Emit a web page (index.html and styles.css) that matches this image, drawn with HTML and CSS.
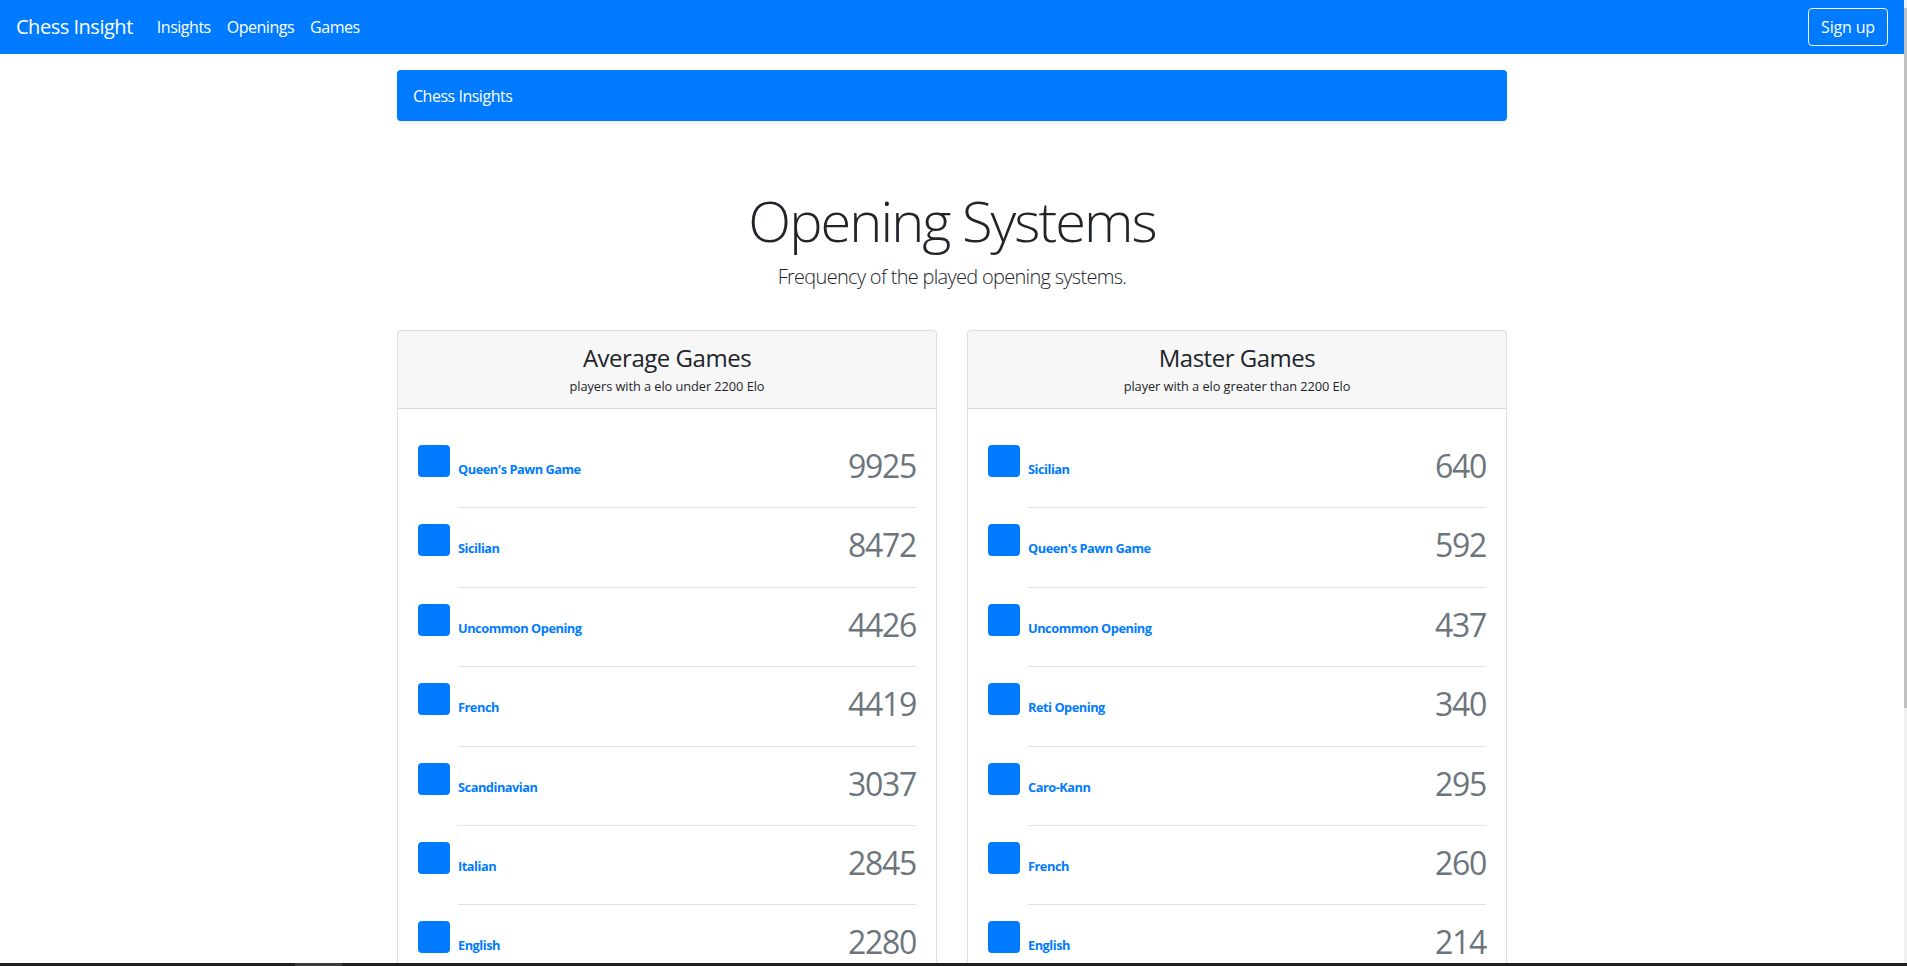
FILE: index.html
```html
<!DOCTYPE html>
<html lang="en">
<head>
<meta charset="utf-8">
<title>Chess Insight</title>
<link rel="stylesheet" href="styles.css">
</head>
<body>
<nav class="navbar">
  <a class="brand" href="#">Chess Insight</a>
  <ul class="nav-links">
    <li><a href="#">Insights</a></li>
    <li><a href="#">Openings</a></li>
    <li><a href="#">Games</a></li>
  </ul>
  <a class="btn-outline" href="#">Sign up</a>
</nav>
<main class="container">
  <div class="banner">Chess Insights</div>
  <header class="page-header">
    <h1 class="display">Opening Systems</h1>
    <p class="lead">Frequency of the played opening systems.</p>
  </header>
  <div class="card-row">
    <section class="card">
      <div class="card-header">
        <h4 class="card-title">Average Games</h4>
        <div><small>players with a elo under 2200 Elo</small></div>
      </div>
      <div class="card-body">
        <div class="media"><span class="thumb"></span><div class="media-body"><a class="name" href="#">Queen's Pawn Game</a><span class="count">9925</span></div></div>
        <div class="media"><span class="thumb"></span><div class="media-body"><a class="name" href="#">Sicilian</a><span class="count">8472</span></div></div>
        <div class="media"><span class="thumb"></span><div class="media-body"><a class="name" href="#">Uncommon Opening</a><span class="count">4426</span></div></div>
        <div class="media"><span class="thumb"></span><div class="media-body"><a class="name" href="#">French</a><span class="count">4419</span></div></div>
        <div class="media"><span class="thumb"></span><div class="media-body"><a class="name" href="#">Scandinavian</a><span class="count">3037</span></div></div>
        <div class="media"><span class="thumb"></span><div class="media-body"><a class="name" href="#">Italian</a><span class="count">2845</span></div></div>
        <div class="media"><span class="thumb"></span><div class="media-body"><a class="name" href="#">English</a><span class="count">2280</span></div></div>
      </div>
    </section>
    <section class="card">
      <div class="card-header">
        <h4 class="card-title">Master Games</h4>
        <div><small>player with a elo greater than 2200 Elo</small></div>
      </div>
      <div class="card-body">
        <div class="media"><span class="thumb"></span><div class="media-body"><a class="name" href="#">Sicilian</a><span class="count">640</span></div></div>
        <div class="media"><span class="thumb"></span><div class="media-body"><a class="name" href="#">Queen's Pawn Game</a><span class="count">592</span></div></div>
        <div class="media"><span class="thumb"></span><div class="media-body"><a class="name" href="#">Uncommon Opening</a><span class="count">437</span></div></div>
        <div class="media"><span class="thumb"></span><div class="media-body"><a class="name" href="#">Reti Opening</a><span class="count">340</span></div></div>
        <div class="media"><span class="thumb"></span><div class="media-body"><a class="name" href="#">Caro-Kann</a><span class="count">295</span></div></div>
        <div class="media"><span class="thumb"></span><div class="media-body"><a class="name" href="#">French</a><span class="count">260</span></div></div>
        <div class="media"><span class="thumb"></span><div class="media-body"><a class="name" href="#">English</a><span class="count">214</span></div></div>
      </div>
    </section>
  </div>
</main>
<div class="scrollbar"><div class="scroll-thumb"></div></div>
<div class="taskbar"><span class="task-item"></span></div>
</body>
</html>
```
FILE: styles.css
```css
html {
  -webkit-font-smoothing: antialiased;
}
body {
  margin: 0 3px 0 0;
  font-family: "Open Sans", "Noto Sans", "Liberation Sans", sans-serif;
  font-size: 16px;
  line-height: 1.5;
  letter-spacing: -0.03em;
  color: #212529;
  background: #fff;
}
a {
  text-decoration: none;
}
.navbar {
  display: flex;
  align-items: center;
  padding: 8px 16px;
  background: #007bff;
}
.brand {
  font-size: 20px;
  line-height: 30px;
  padding: 4px 0;
  margin-right: 16px;
  color: #fff;
}
.nav-links {
  display: flex;
  flex: 1;
  list-style: none;
  margin: 0;
  padding: 0;
}
.nav-links a {
  display: block;
  padding: 7px 8px;
  color: #fff;
}
.btn-outline {
  display: inline-block;
  padding: 6px 12px;
  line-height: 24px;
  letter-spacing: -0.01em;
  color: #fff;
  border: 1px solid #f8f9fa;
  border-radius: 4px;
}
.container {
  width: 1110px;
  margin: 0 auto;
}
.banner {
  margin: 16px 0;
  padding: 13px 16px 11px;
  line-height: 27px;
  color: #fff;
  background: #007bff;
  border-radius: 4px;
  box-shadow: 0 2px 4px rgba(0, 0, 0, 0.075);
}
.page-header {
  text-align: center;
  padding: 50px 16px 24px;
}
.display {
  margin: 0 0 8px;
  font-size: 56px;
  font-weight: 300;
  line-height: 1.2;
  letter-spacing: -0.035em;
}
.lead {
  margin: 0 0 14px;
  font-size: 20px;
  font-weight: 300;
  letter-spacing: -0.035em;
}
.card-row {
  display: grid;
  grid-template-columns: 1fr 1fr;
  gap: 30px;
}
.card {
  border: 1px solid rgba(0, 0, 0, 0.125);
  border-radius: 4px;
  text-align: center;
  overflow: hidden;
}
.card-header {
  padding: 13px 20px 11px;
  background: rgba(0, 0, 0, 0.03);
  border-bottom: 1px solid rgba(0, 0, 0, 0.125);
}
.card-title {
  margin: 0;
  font-size: 24px;
  font-weight: 400;
  line-height: 1.2;
}
small {
  font-size: 80%;
  letter-spacing: -0.005em;
}
.card-body {
  padding: 20px;
  text-align: left;
}
.media {
  display: flex;
  align-items: flex-start;
  padding-top: 16px;
}
.thumb {
  flex: none;
  width: 32px;
  height: 32px;
  margin-right: 8px;
  border-radius: 4px;
  background: #007bff;
}
.media-body {
  flex: 1;
  display: flex;
  justify-content: space-between;
  align-items: flex-start;
  padding-bottom: 22px;
  border-bottom: 1px solid #dee2e6;
}
.name {
  margin-top: 15px;
  font-size: 12.8px;
  font-weight: 700;
  line-height: 19.2px;
  color: #007bff;
}
.count {
  margin-top: 2px;
  font-size: 32px;
  line-height: 38.4px;
  letter-spacing: -0.04em;
  color: #6c757d;
}
.scrollbar {
  position: fixed;
  top: 0;
  right: 0;
  bottom: 0;
  width: 3px;
  background: #f0f0f0;
}
.scroll-thumb {
  height: 700px;
  margin-top: 8px;
  background: #c1c1c1;
}
.taskbar {
  position: fixed;
  left: 0;
  right: 0;
  bottom: 0;
  height: 3px;
  background: #1f1f1f;
}
.task-item {
  display: block;
  width: 47px;
  height: 3px;
  margin-left: 295px;
  background: #3c3c3c;
}
```
